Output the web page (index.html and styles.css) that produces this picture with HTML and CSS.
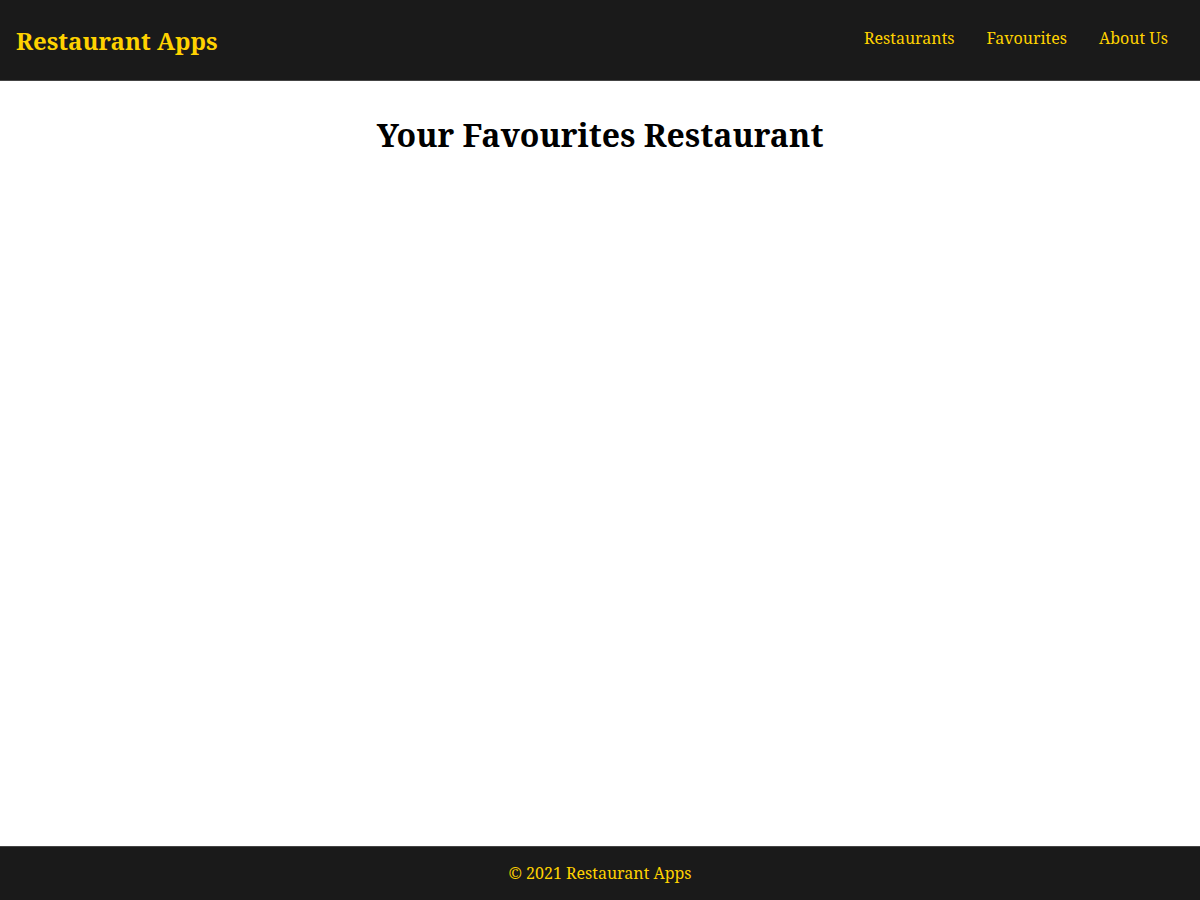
FILE: index.html
```html
<!DOCTYPE html>
<html lang="en">
<head>
<meta charset="utf-8">
<title>Restaurant Apps</title>
<link rel="stylesheet" href="styles.css">
</head>
<body>
<header class="app-bar">
  <a class="brand" href="#">Restaurant Apps</a>
  <nav class="nav">
    <a class="nav-link" href="#">Restaurants</a>
    <a class="nav-link" href="#">Favourites</a>
    <a class="nav-link" href="#">About Us</a>
  </nav>
</header>
<main class="content">
  <h2 class="page-title">Your Favourites Restaurant</h2>
</main>
<footer class="footer">
  <p class="footer-text">© 2021 Restaurant Apps</p>
</footer>
</body>
</html>
```
FILE: styles.css
```css
* { box-sizing: border-box; }
html, body { height: 100%; }
body {
  margin: 0;
  font-family: "Noto Serif", serif;
  background: #fff;
  color: #000;
  display: flex;
  flex-direction: column;
}
.app-bar {
  height: 81px;
  flex-shrink: 0;
  background: #1a1a1a;
  border-bottom: 1px solid #444;
  display: flex;
  align-items: center;
  justify-content: space-between;
  padding: 0 16px;
}
.brand {
  color: #ffd200;
  font-size: 24px;
  font-weight: 700;
  text-decoration: none;
}
.nav { display: flex; margin-top: -4px; }
.nav-link {
  color: #ffd200;
  font-size: 16px;
  text-decoration: none;
  padding: 8px 16px;
}
.content { flex: 1; padding: 0 16px; }
.page-title {
  text-align: center;
  font-size: 32px;
  font-weight: 700;
  margin: 32px 0;
}
.footer {
  height: 54px;
  flex-shrink: 0;
  background: #1a1a1a;
  border-top: 1px solid #444;
  display: flex;
  align-items: center;
  justify-content: center;
  padding-bottom: 2px;
}
.footer-text {
  margin: 0;
  color: #ffd200;
  font-size: 16px;
}
```
